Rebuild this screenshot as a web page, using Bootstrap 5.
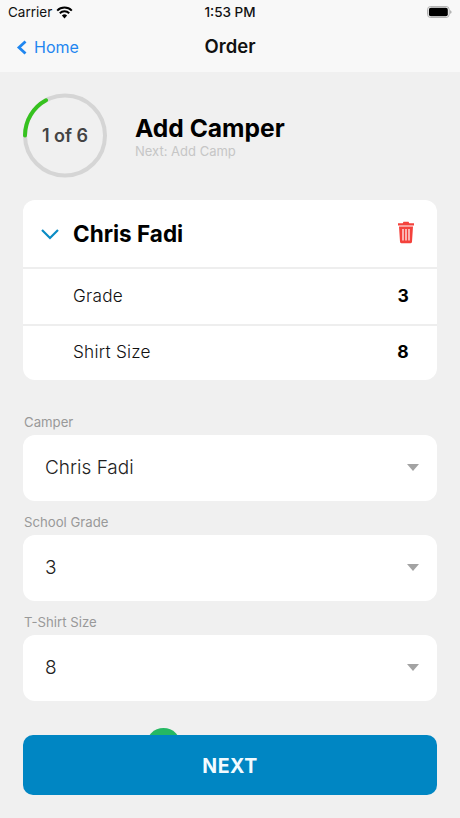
<!DOCTYPE html>
<html lang="en">
<head>
<meta charset="utf-8">
<title>Order</title>
<link href="https://cdn.jsdelivr.net/npm/bootstrap@5.3.0/dist/css/bootstrap.min.css" rel="stylesheet">
<style>
html,body{height:100%}
body{background:#f0f0f0;font-family:Inter,"Liberation Sans",sans-serif;color:#000;overflow:hidden}
.app-top{background:#f8f8f8;height:72px}
.status-row{height:24px;padding:0 8px;font-size:13.5px;color:#111}
.status-time{font-size:13.5px;font-weight:500;left:0;right:0;text-align:center;top:2px}
.nav-row{height:46px}
.nav-back{color:#1f86f0;font-size:16px;left:16px;top:50%;transform:translateY(-50%);text-decoration:none;gap:6px}
.nav-name{font-size:18.5px;font-weight:600;color:#111}
.head-row{padding:21px 23px 0;gap:28px;height:128px}
.ring-box{width:84px;height:85px;flex:none}
.ring-text{font-size:18px;font-weight:600;color:#444;inset:0}
.head-title{font-size:24.6px;font-weight:700;line-height:30px;margin-top:-2px}
.head-next{font-size:13px;line-height:14px;color:#c6c6c6;margin-top:1px}
.sheet{margin:0 23px;background:#fff;border-radius:12px;height:180px;overflow:hidden}
.sheet-head{height:69px;padding:0 22px 0 17px;border-bottom:2px solid #eee}
.sheet-name{font-size:22.500px;font-weight:700;margin-left:13px;margin-top:1px}
.sheet-trash{margin-top:-4px}
.sheet-line{height:55px;padding:0 28px 1px 50px;font-size:17.2px;font-weight:300;letter-spacing:.25px;color:#111}
.sheet-line+.sheet-line{border-top:2px solid #eee;height:56px;padding-bottom:2px}
.sheet-val{font-weight:700;color:#000;font-size:17.5px}
.fields{margin:0 23px;padding-top:33px}
.field-label{font-size:13.2px;line-height:17px;color:#999;margin:0 0 5px 1px;height:17px;padding-top:1px}
.field-box{height:66px;background:#fff;border-radius:12px;padding:0 18px 0 22px;font-size:19px;font-weight:300;color:#222;margin-bottom:12px}
.field-box:last-child{margin-bottom:0}
.caret-down{width:0;height:0;border-left:6.500px solid transparent;border-right:6.500px solid transparent;border-top:7px solid #a3a3a3;margin-bottom:1px}
.foot-wrap{margin:34px 23px 0}
.green-dot{width:35px;height:35px;border-radius:50%;background:#25b863;left:123px;top:-7px}
.next-btn{height:60px;width:100%;background:#0086c3;border:0;border-radius:10px;color:#f2fbff;font-size:19.500px;font-weight:700;letter-spacing:.5px;padding-top:10px}
.next-btn:hover,.next-btn:active{background:#0086c3;color:#f2fbff}
</style>
</head>
<body>
<header class="app-top position-relative">
  <div class="status-row d-flex align-items-center justify-content-between position-relative">
    <div class="d-flex align-items-center gap-1">
      <span>Carrier</span>
      <svg width="17" height="13" viewBox="0 0 17 13" aria-hidden="true"><path d="M1.2 4.6a10.4 10.4 0 0 1 14.6 0M3.8 7.3a6.7 6.7 0 0 1 9.4 0" fill="none" stroke="#000" stroke-width="2"/><path d="M5.9 9.6a3.7 3.7 0 0 1 5.2 0L8.5 12.4z" fill="#000"/></svg>
    </div>
    <svg width="25" height="12" viewBox="0 0 27 13" aria-hidden="true"><rect x=".5" y=".5" width="23.5" height="12" rx="3.5" fill="none" stroke="#aaa"/><rect x="2" y="2" width="20.5" height="9" rx="2" fill="#000"/><path d="M25 4.5c1 .3 1.500 1 1.500 2s-.5 1.700-1.500 2z" fill="#aaa"/></svg>
    <div class="status-time position-absolute">1:53 PM</div>
  </div>
  <div class="nav-row d-flex align-items-center justify-content-center position-relative">
    <a href="#" class="nav-back position-absolute d-flex align-items-center">
      <svg width="12" height="15" viewBox="0 0 12 15" aria-hidden="true"><path d="M9.500 1.500 3 7.500l6.500 6" fill="none" stroke="#1f86f0" stroke-width="2.800"/></svg>
      <span>Home</span>
    </a>
    <div class="nav-name">Order</div>
  </div>
</header>

<section class="head-row d-flex align-items-start">
  <div class="ring-box position-relative">
    <svg width="84" height="85" viewBox="0 0 84 85" aria-hidden="true">
      <circle cx="42" cy="42.500" r="40" fill="none" stroke="#d5d5d5" stroke-width="4"/>
      <path d="M2 42.500A40 40 0 0 1 23 7.300" fill="none" stroke="#36c21f" stroke-width="4" stroke-linecap="round"/>
    </svg>
    <div class="ring-text position-absolute d-flex align-items-center justify-content-center">1 of 6</div>
  </div>
  <div class="pt-3">
    <div class="head-title mt-1">Add Camper</div>
    <div class="head-next">Next: Add Camp</div>
  </div>
</section>

<section class="sheet">
  <div class="sheet-head d-flex align-items-center">
    <svg width="20" height="12" viewBox="0 0 20 12" aria-hidden="true"><path d="M2 2l8 8 8-8" fill="none" stroke="#0a8cc4" stroke-width="2.200"/></svg>
    <div class="sheet-name flex-grow-1">Chris Fadi</div>
    <svg class="sheet-trash" width="18" height="24" viewBox="0 0 18 24" aria-hidden="true"><path d="M6.500 1.800h5l.8 1.400H17v2.200H1V3.200h4.700z" fill="#f4423c"/><path fill-rule="evenodd" d="M2 6.400h14l-1 15.400c0 .8-.6 1.400-1.400 1.400H4.400c-.8 0-1.400-.6-1.400-1.400zM5.400 9v11.500h1.200V9zM8.400 9v11.500h1.200V9zM11.400 9v11.500h1.200V9z" fill="#f4423c"/></svg>
  </div>
  <div class="sheet-line d-flex align-items-center justify-content-between"><span>Grade</span><span class="sheet-val">3</span></div>
  <div class="sheet-line d-flex align-items-center justify-content-between"><span>Shirt Size</span><span class="sheet-val">8</span></div>
</section>

<section class="fields">
  <div class="field-label">Camper</div>
  <div class="field-box d-flex align-items-center justify-content-between"><span>Chris Fadi</span><span class="caret-down"></span></div>
  <div class="field-label">School Grade</div>
  <div class="field-box d-flex align-items-center justify-content-between"><span>3</span><span class="caret-down"></span></div>
  <div class="field-label">T-Shirt Size</div>
  <div class="field-box d-flex align-items-center justify-content-between"><span>8</span><span class="caret-down"></span></div>
</section>

<div class="foot-wrap position-relative">
  <div class="green-dot position-absolute"></div>
  <button type="button" class="btn next-btn position-relative">NEXT</button>
</div>
<script src="https://cdn.jsdelivr.net/npm/bootstrap@5.3.0/dist/js/bootstrap.bundle.min.js"></script>
</body>
</html>
